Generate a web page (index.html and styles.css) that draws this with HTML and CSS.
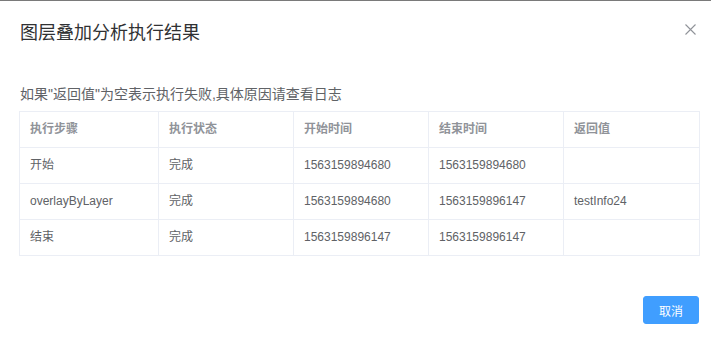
FILE: index.html
```html
<!DOCTYPE html>
<html lang="zh-CN">
<head>
    <meta charset="UTF-8">
    <meta name="viewport" content="width=device-width, initial-scale=1.0">
    <title>图层叠加分析执行结果</title>
    <link rel="stylesheet" href="styles.css">
</head>
<body>
    <div class="dialog">
        <div class="dialog-header">
            <span class="dialog-title">图层叠加分析执行结果</span>
            <button type="button" class="dialog-close" aria-label="Close">
                <svg width="11" height="11" viewBox="0 0 11 11">
                    <path d="M0.5 0.5 L10.5 10.5 M10.5 0.5 L0.5 10.5" stroke="#909399" stroke-width="1.1" fill="none"/>
                </svg>
            </button>
        </div>

        <div class="dialog-body">
            <p class="tip">如果"返回值"为空表示执行失败,具体原因请查看日志</p>
            <table class="result-table">
                <colgroup>
                    <col class="col-first">
                    <col class="col">
                    <col class="col">
                    <col class="col">
                    <col class="col-last">
                </colgroup>
                <thead>
                    <tr>
                        <th>执行步骤</th>
                        <th>执行状态</th>
                        <th>开始时间</th>
                        <th>结束时间</th>
                        <th>返回值</th>
                    </tr>
                </thead>
                <tbody>
                    <tr>
                        <td>开始</td>
                        <td>完成</td>
                        <td>1563159894680</td>
                        <td>1563159894680</td>
                        <td></td>
                    </tr>
                    <tr>
                        <td>overlayByLayer</td>
                        <td>完成</td>
                        <td>1563159894680</td>
                        <td>1563159896147</td>
                        <td>testInfo24</td>
                    </tr>
                    <tr>
                        <td>结束</td>
                        <td>完成</td>
                        <td>1563159896147</td>
                        <td>1563159896147</td>
                        <td></td>
                    </tr>
                </tbody>
            </table>
        </div>

        <div class="dialog-footer">
            <button type="button" class="btn-primary">取消</button>
        </div>
    </div>
</body>
</html>
```

FILE: styles.css
```css
body {
    margin: 0;
    font-family: "Liberation Sans", "Noto Sans CJK SC", sans-serif;
    background: #fff;
}
.dialog {
    position: relative;
    border-top: 1px solid #7a7a7a;
    background: #fff;
    height: 337px;
}
.dialog-header {
    padding: 20px 20px 10px;
}
.dialog-title {
    display: block;
    font-size: 18px;
    line-height: 24px;
    color: #303133;
}
.dialog-close {
    position: absolute;
    top: 23px;
    right: 15px;
    padding: 0;
    border: none;
    background: transparent;
    width: 11px;
    height: 11px;
    cursor: pointer;
}
.dialog-close svg {
    display: block;
}
.dialog-body {
    padding: 30px 12px 30px 19px;
    color: #606266;
    font-size: 14px;
}
.tip {
    margin: 0 0 8px 1px;
    line-height: 18px;
}
.result-table {
    width: 680px;
    table-layout: fixed;
    border-collapse: collapse;
    border: 1px solid #ebeef5;
    font-size: 12px;
}
.col-first {
    width: 139px;
}
.col {
    width: 135px;
}
.col-last {
    width: 136px;
}
th, td {
    height: 23px;
    padding: 6px 10px;
    line-height: 23px;
    border: 1px solid #ebeef5;
    text-align: left;
    white-space: nowrap;
}
th {
    color: #909399;
    font-weight: bold;
}
td {
    color: #606266;
}
.dialog-footer {
    padding: 10px 12px 20px 20px;
    text-align: right;
}
.btn-primary {
    height: 28px;
    padding: 0 15px;
    font-family: inherit;
    font-size: 12px;
    color: #fff;
    background-color: #409eff;
    border: 1px solid #409eff;
    border-radius: 3px;
    cursor: pointer;
}
.btn-primary:hover {
    background-color: #66b1ff;
}
```
